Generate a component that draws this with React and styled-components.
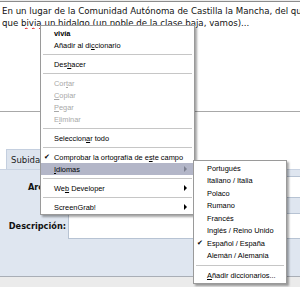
import React from 'react'
import styled, { createGlobalStyle } from 'styled-components'

const GlobalStyle = createGlobalStyle`
  html, body {
    margin: 0;
    padding: 0;
    background: #ffffff;
  }
  body {
    width: 300px;
    height: 287px;
    overflow: hidden;
    font-family: "DejaVu Sans", Verdana, sans-serif;
  }
`

const Page = styled.div`
  position: relative;
  width: 300px;
  height: 287px;
  overflow: hidden;
  background: #ebebeb;
  display: flex;
  flex-direction: column;
`

const Editor = styled.div`
  height: 111px;
  margin-top: 1px;
  border-top: 1px solid #8c8c8c;
  border-bottom: 1px solid #a8a8a8;
  background: #fff;
  padding: 3px 0 0 2px;
  box-sizing: border-box;
  font-size: 8.65px;
  line-height: 12px;
  color: #111;
`

const Line = styled.div`
  white-space: nowrap;
  overflow: hidden;
`

const Misspelled = styled.span`
  text-decoration: underline wavy #e01010;
  text-decoration-thickness: 1px;
  text-underline-offset: 1px;
`

const Gap = styled.div`
  height: 37px;
  background: #fff;
`

const Tabs = styled.div`
  display: flex;
  height: 20px;
  background: #fff;
  border-bottom: 1px solid #c9d3e2;
  padding-left: 6px;
`

const Tab = styled.div`
  padding: 0 4px;
  display: flex;
  align-items: center;
  font-size: 8.5px;
  color: #222;
  background: #dde4ee;
  border: 1px solid #c4cfdf;
  border-bottom: none;
`

const Panel = styled.div`
  height: 107px;
  background: #dfe6f0;
  border-bottom: 1px solid #a9aeb6;
  display: flex;
  flex-direction: column;
  gap: 15px;
  padding-top: 6px;
  box-sizing: border-box;
`

const Field = styled.div`
  display: grid;
  grid-template-columns: 66px 1fr;
  align-items: center;
  column-gap: 2px;
`

const Label = styled.div`
  text-align: right;
  font-size: 8.2px;
  font-weight: bold;
  color: #111;
`

const Input = styled.div`
  height: ${({ tall }) => (tall ? 24 : 20)}px;
  background: #fff;
  border: 1px solid #b7c3d3;
  border-right: none;
`

const Menu = styled.div`
  position: absolute;
  left: ${({ x }) => x}px;
  top: ${({ y }) => y}px;
  width: ${({ w }) => w}px;
  background: #fff;
  border: 1px solid #9a9a9a;
  padding: 1px 0;
  box-shadow: 2px 2px 2px rgba(0, 0, 0, 0.35);
  font-family: "Liberation Sans", Arial, sans-serif;
  font-size: 7.4px;
  color: #000;
  z-index: ${({ z }) => z || 1};
`

const Item = styled.div`
  position: relative;
  height: ${({ h }) => h || 12}px;
  display: flex;
  align-items: center;
  padding-left: ${({ pad }) => pad || 13}px;
  font-weight: ${({ bold }) => (bold ? 'bold' : 'normal')};
  color: ${({ disabled }) => (disabled ? '#a8a8a8' : '#000')};
  background: ${({ active }) => (active ? '#b3b6c8' : 'transparent')};
  white-space: pre;

  u {
    text-underline-offset: 1px;
  }
`

const Check = styled.span`
  position: absolute;
  left: 3px;
  font-size: 7px;
  font-family: "DejaVu Sans", sans-serif;
`

const Arrow = styled.span`
  position: absolute;
  right: 7px;
  top: 50%;
  margin-top: -3px;
  width: 0;
  height: 0;
  border-top: 3px solid transparent;
  border-bottom: 3px solid transparent;
  border-left: 3px solid ${({ dim }) => (dim ? '#7d8090' : '#000')};
`

const Separator = styled.div`
  height: 7px;
  display: flex;
  align-items: center;
  padding: 0 2px;

  &::after {
    content: '';
    flex: 1;
    height: 1px;
    background: #c6c6c6;
  }
`

const languages = [
  'Portugués',
  'Italiano / Italia',
  'Polaco',
  'Rumano',
  'Francés',
  'Inglés / Reino Unido',
  'Español / España',
  'Alemán / Alemania',
]

export default function App() {
  return (
    <>
      <GlobalStyle />
      <Page>
        <Editor>
          <Line>En un lugar de la Comunidad Autónoma de Castilla la Mancha, del que no quiero acordarme</Line>
          <Line>
            que <Misspelled>bivia</Misspelled> un hidalgo (un noble de la clase baja, vamos)...
          </Line>
        </Editor>
        <Gap />
        <Tabs>
          <Tab>Subida</Tab>
        </Tabs>
        <Panel>
          <Field>
            <Label>Archivo:</Label>
            <Input />
          </Field>
          <Field>
            <Label>Descripción:</Label>
            <Input tall />
          </Field>
        </Panel>

        <Menu x={40} y={25} w={153}>
          <Item bold>vivía</Item>
          <Item>Añadir al di<u>c</u>cionario</Item>
          <Separator />
          <Item>Des<u>h</u>acer</Item>
          <Separator />
          <Item disabled>Cor<u>t</u>ar</Item>
          <Item disabled><u>C</u>opiar</Item>
          <Item disabled><u>P</u>egar</Item>
          <Item disabled>E<u>l</u>iminar</Item>
          <Separator />
          <Item>Seleccion<u>a</u>r todo</Item>
          <Separator />
          <Item><Check>✔</Check>Comprobar la ortografía de e<u>s</u>te campo</Item>
          <Item active><u>I</u>diomas<Arrow dim /></Item>
          <Separator />
          <Item>We<u>b</u>{' Developer'}<Arrow /></Item>
          <Separator />
          <Item>ScreenGrab!<Arrow /></Item>
        </Menu>

        <Menu x={193} y={160} w={92} z={2}>
          {languages.map((lang) => (
            <Item key={lang} h={12.5}>
              {lang === 'Español / España' && <Check>✔</Check>}
              {lang}
            </Item>
          ))}
          <Separator />
          <Item h={12.5}><u>A</u>ñadir diccionarios...</Item>
        </Menu>
      </Page>
    </>
  )
}
